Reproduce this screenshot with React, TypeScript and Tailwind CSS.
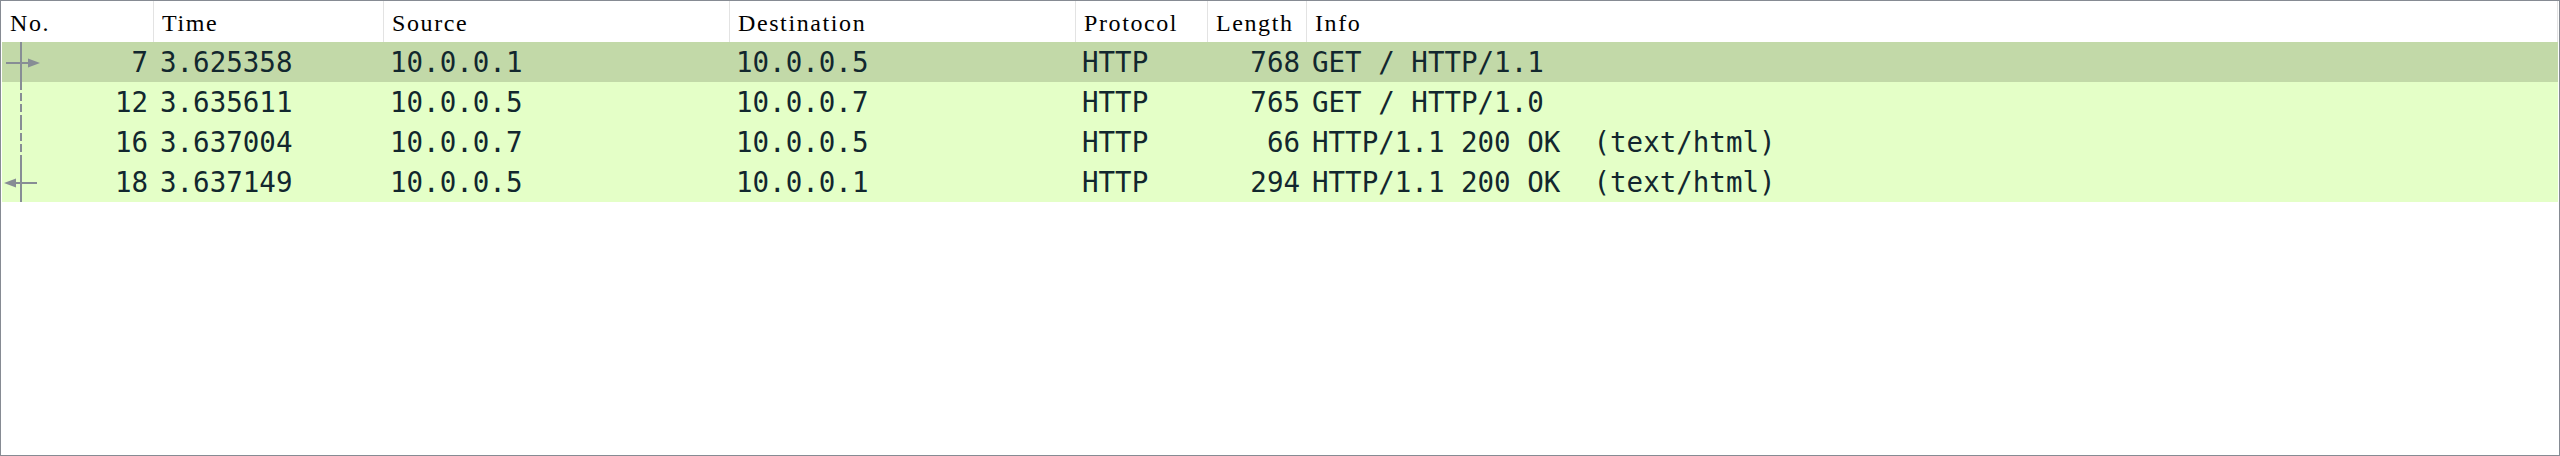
import React from "react";

type Row = {
  no: string;
  time: string;
  src: string;
  dst: string;
  proto: string;
  len: string;
  info: string;
  selected?: boolean;
  mark: "start" | "mid" | "end";
};

const rows: Row[] = [
  { no: "7", time: "3.625358", src: "10.0.0.1", dst: "10.0.0.5", proto: "HTTP", len: "768", info: "GET / HTTP/1.1", selected: true, mark: "start" },
  { no: "12", time: "3.635611", src: "10.0.0.5", dst: "10.0.0.7", proto: "HTTP", len: "765", info: "GET / HTTP/1.0", mark: "mid" },
  { no: "16", time: "3.637004", src: "10.0.0.7", dst: "10.0.0.5", proto: "HTTP", len: "66", info: "HTTP/1.1 200 OK  (text/html)", mark: "mid" },
  { no: "18", time: "3.637149", src: "10.0.0.5", dst: "10.0.0.1", proto: "HTTP", len: "294", info: "HTTP/1.1 200 OK  (text/html)", mark: "end" },
];

const headers = ["No.", "Time", "Source", "Destination", "Protocol", "Length", "Info"];

const GRID = "grid grid-cols-[152px_230px_346px_346px_132px_99px_1fr]";
const LINE = "#878d95";

function Mark({ kind }: { kind: Row["mark"] }) {
  return (
    <svg className="absolute left-0 top-0" width="44" height="40" viewBox="0 0 44 40">
      {kind === "mid" ? (
        <line x1="19" y1="0" x2="19" y2="40" stroke={LINE} strokeWidth="2" strokeDasharray="8 3" />
      ) : (
        <rect x="18" y="0" width="2" height="40" fill={LINE} />
      )}
      {kind === "start" && (
        <>
          <rect x="4" y="20" width="22" height="2" fill={LINE} />
          <polygon points="26,16.5 38,21 26,25.5" fill={LINE} />
        </>
      )}
      {kind === "end" && (
        <>
          <rect x="14" y="20" width="21" height="2" fill={LINE} />
          <polygon points="2,21 14,16.5 14,25.5" fill={LINE} />
        </>
      )}
    </svg>
  );
}

export default function App() {
  return (
    <div className="w-[2560px] h-[456px] border border-[#868b93] bg-white overflow-hidden">
      <div className="px-[1px]">
        <div className={`${GRID} h-[41px] bg-white`}>
          {headers.map((h) => (
            <div
              key={h}
              className="h-[41px] border-r border-[#e3e3e3] pl-[8px] pt-[4px] leading-[37px] text-[24px] tracking-[1.6px] text-black whitespace-nowrap overflow-hidden"
              style={{ fontFamily: '"Liberation Serif", serif' }}
            >
              {h}
            </div>
          ))}
        </div>
        {rows.map((r) => (
          <div
            key={r.no}
            className={`${GRID} h-[40px] leading-[40px] text-[27.5px] text-[#12272e] whitespace-pre ${
              r.selected ? "bg-[#c2d9a8]" : "bg-[#e4ffc7]"
            }`}
            style={{ fontFamily: '"DejaVu Sans Mono", monospace' }}
          >
            <div className="relative text-right pr-[6px]">
              <Mark kind={r.mark} />
              <span className="relative">{r.no}</span>
            </div>
            <div className="pl-[6px] overflow-hidden">{r.time}</div>
            <div className="pl-[6px] overflow-hidden">{r.src}</div>
            <div className="pl-[6px] overflow-hidden">{r.dst}</div>
            <div className="pl-[6px] overflow-hidden">{r.proto}</div>
            <div className="text-right pr-[7px] overflow-hidden">{r.len}</div>
            <div className="pl-[5px] overflow-hidden">{r.info}</div>
          </div>
        ))}
      </div>
    </div>
  );
}
